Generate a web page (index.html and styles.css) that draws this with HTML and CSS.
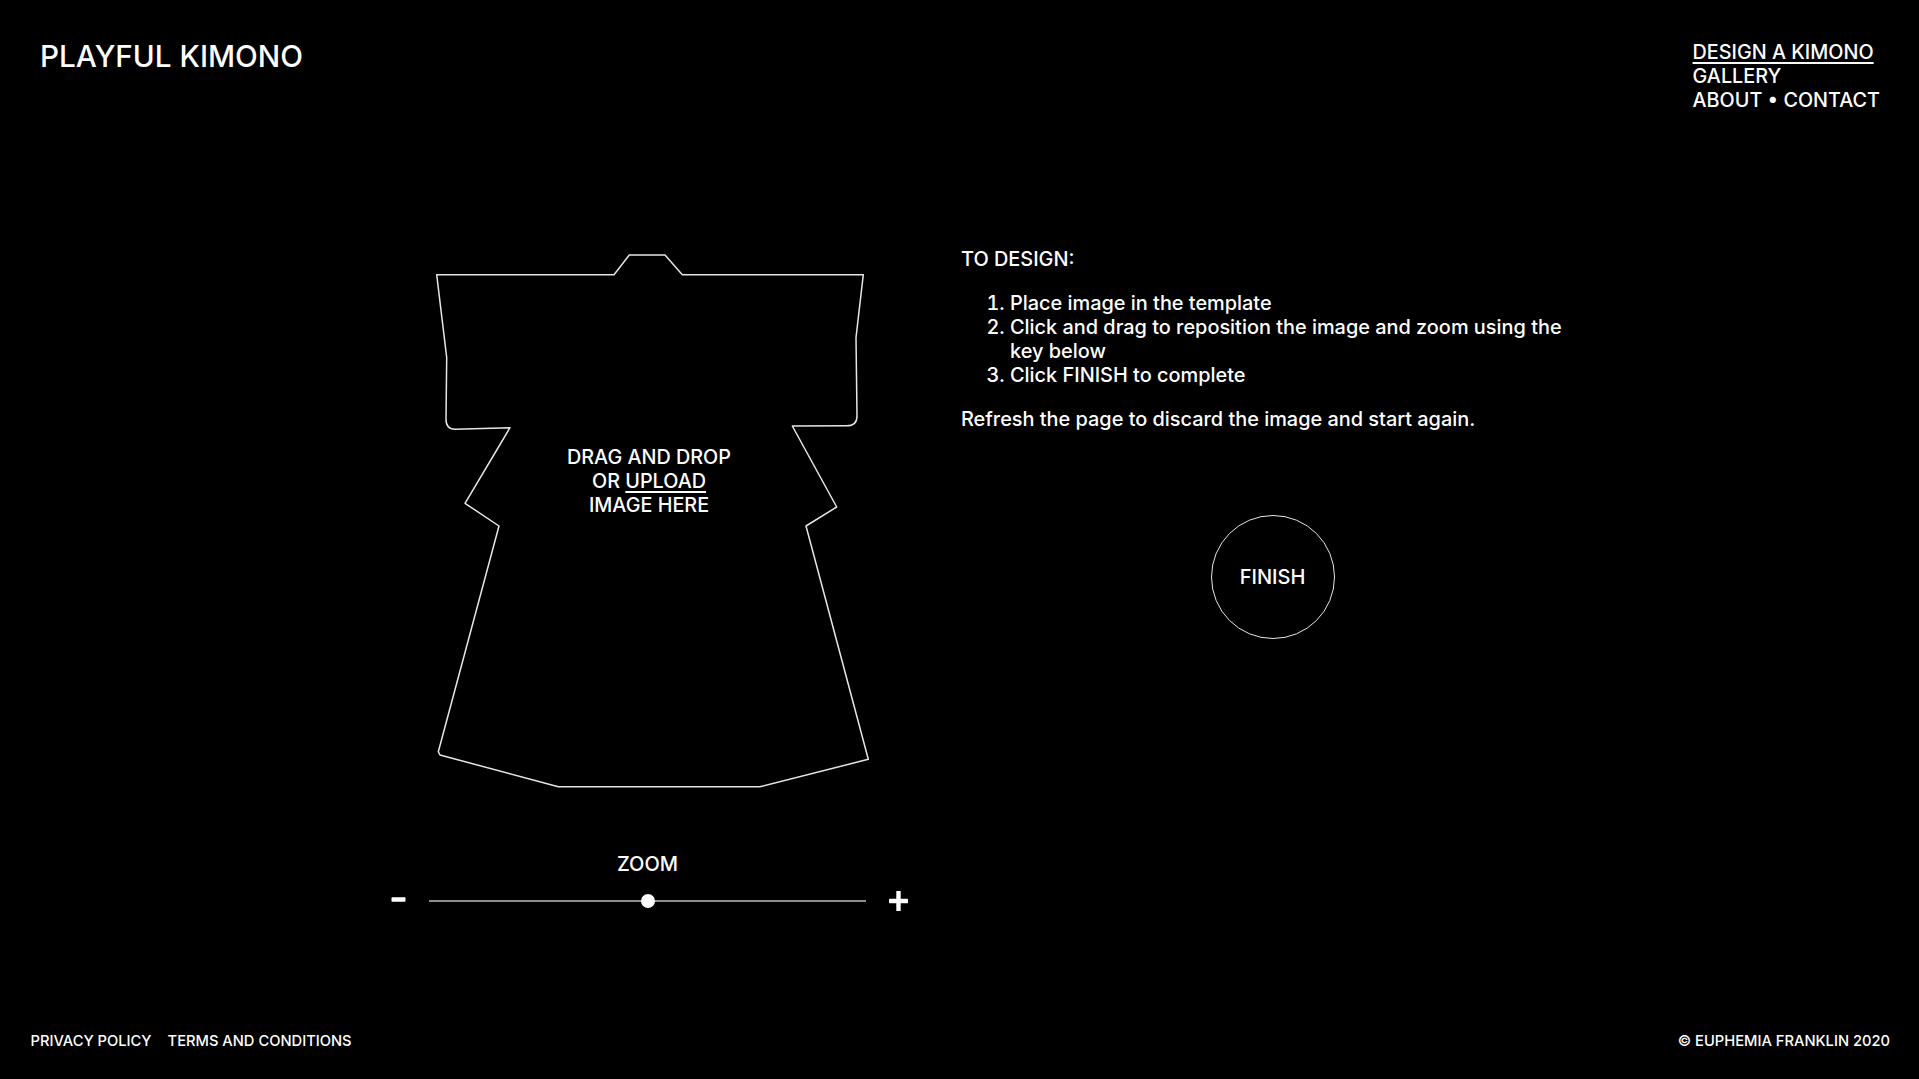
FILE: index.html
```html
<!DOCTYPE html>
<html lang="en">
<head>
<meta charset="utf-8">
<title>Playful Kimono – Design a Kimono</title>
<link rel="stylesheet" href="styles.css">
</head>
<body>
<div class="page">
  <header class="header">
    <div class="logo">PLAYFUL KIMONO</div>
    <nav class="nav">
      <a class="nav-link active" href="#">DESIGN A KIMONO</a>
      <a class="nav-link" href="#">GALLERY</a>
      <div class="nav-row"><a class="nav-link" href="#">ABOUT</a> • <a class="nav-link" href="#">CONTACT</a></div>
    </nav>
  </header>

  <main class="main">
    <section class="design">
      <div class="kimono">
        <svg class="kimono-shape" width="436" height="536" viewBox="0 0 436 536">
          <path d="M1.7 21.7 L179 21.7 L194.3 2 L230 2 L247.3 21.7 L428.3 21.7 L421 84.7 L422 163 Q422 172.8 411.7 172.8 L357.3 173 L401.7 254 L371 273 L433.3 506.3 L325 533.7 L123.3 533.7 L5 502 L3.3 498.7 L64 273 L30 250.3 L75 174.7 L20 176.3 Q11 176.3 11 166 L11.7 104.7 Z" fill="none" stroke="#e6e6e6" stroke-width="1.5" stroke-linejoin="round"/>
        </svg>
        <div class="drop-text">DRAG AND DROP<br>OR <a class="upload" href="#">UPLOAD</a><br>IMAGE HERE</div>
      </div>
      <div class="zoom">
        <button class="zoom-btn minus" aria-label="Zoom out">
          <svg width="15" height="14" viewBox="0 0 15 14"><rect x="0.5" y="3.3" width="14" height="4.4" rx="0.6" fill="#fff"/></svg>
        </button>
        <div class="zoom-track-wrap">
          <div class="zoom-label">ZOOM</div>
          <div class="zoom-track"><span class="zoom-knob"></span></div>
        </div>
        <button class="zoom-btn plus" aria-label="Zoom in">
          <svg width="19" height="20" viewBox="0 0 19 20"><rect x="0" y="7.8" width="19" height="4.4" rx="0.6" fill="#fff"/><rect x="7.3" y="0" width="4.4" height="20" rx="0.6" fill="#fff"/></svg>
        </button>
      </div>
    </section>

    <section class="instructions">
      <p class="heading">TO DESIGN:</p>
      <ol class="steps">
        <li>Place image in the template</li>
        <li>Click and drag to reposition the image and zoom using the key below</li>
        <li>Click FINISH to complete</li>
      </ol>
      <p class="note">Refresh the page to discard the image and start again.</p>
      <button class="finish">FINISH</button>
    </section>
  </main>

  <footer class="footer">
    <div class="footer-links">
      <a href="#">PRIVACY POLICY</a>
      <a href="#">TERMS AND CONDITIONS</a>
    </div>
    <div class="copyright">© EUPHEMIA FRANKLIN 2020</div>
  </footer>
</div>
</body>
</html>
```
FILE: styles.css
```css
* { box-sizing: border-box; }

html, body {
  margin: 0;
  padding: 0;
  background: #000;
  color: #fff;
  font-family: "Inter", "Noto Sans", sans-serif;
}

a { color: #fff; text-decoration: none; }

.page {
  min-height: 100vh;
  height: 1079px;
  display: flex;
  flex-direction: column;
}

.header {
  display: flex;
  justify-content: space-between;
  align-items: flex-start;
  padding: 39px 39px 0 40px;
}

.logo {
  font-size: 29.7px;
  line-height: 35px;
  font-weight: 500;
}

.nav {
  margin-top: 1px;
  display: flex;
  flex-direction: column;
  font-size: 19.8px;
  line-height: 24px;
  font-weight: 500;
}

.nav-link.active {
  text-decoration: underline;
  text-decoration-thickness: 1.5px;
  text-underline-offset: 3px;
}

.main {
  display: flex;
  align-items: flex-start;
  padding: 135px 0 0 391px;
  gap: 53px;
}

.design {
  width: 517px;
  display: flex;
  flex-direction: column;
}

.kimono {
  position: relative;
  margin: 6px 0 0 44px;
  width: 436px;
  height: 536px;
}

.kimono-shape { display: block; }

.drop-text {
  position: absolute;
  top: 192px;
  left: 0;
  width: 428px;
  text-align: center;
  font-size: 19.8px;
  line-height: 24px;
  font-weight: 500;
}

.upload {
  text-decoration: underline;
  text-decoration-thickness: 1.5px;
  text-underline-offset: 3px;
}

.zoom {
  display: flex;
  align-items: flex-end;
  margin-top: 63px;
}

.zoom-btn {
  background: none;
  border: 0;
  padding: 0;
  margin: 0;
  display: block;
  cursor: pointer;
}

.zoom-btn svg { display: block; }

.minus { margin-right: 23px; }
.plus { margin-left: 22.5px; margin-bottom: -3px; }

.zoom-track-wrap {
  width: 437px;
  display: flex;
  flex-direction: column;
  align-items: center;
}

.zoom-label {
  font-size: 20px;
  line-height: 24px;
  font-weight: 500;
}

.zoom-track {
  position: relative;
  margin-top: 18px;
  width: 100%;
  height: 14px;
}

.zoom-track::before {
  content: "";
  position: absolute;
  left: 0;
  right: 0;
  top: 6.2px;
  height: 1.6px;
  background: #8f8f8f;
}

.zoom-knob {
  position: absolute;
  top: 0;
  left: 50%;
  width: 14px;
  height: 14px;
  margin-left: -7px;
  border-radius: 50%;
  background: #fff;
}

.instructions {
  width: 623px;
  display: flex;
  flex-direction: column;
  font-size: 19.9px;
  line-height: 24px;
  font-weight: 500;
}

.heading, .note { margin: 0; }

.steps {
  margin: 20px 0;
  padding-left: 49px;
}

.finish {
  align-self: center;
  margin-top: 84px;
  width: 124px;
  height: 124px;
  border-radius: 50%;
  border: 1.5px solid #e6e6e6;
  background: transparent;
  color: #fff;
  font-family: "Inter", "Noto Sans", sans-serif;
  font-size: 20px;
  font-weight: 500;
  padding: 0;
  cursor: pointer;
}

.footer {
  margin-top: auto;
  display: flex;
  justify-content: space-between;
  padding: 0 29px 28.5px 30.5px;
  font-size: 14.7px;
  line-height: 20px;
  font-weight: 500;
}

.footer-links {
  display: flex;
  gap: 16px;
}
```
